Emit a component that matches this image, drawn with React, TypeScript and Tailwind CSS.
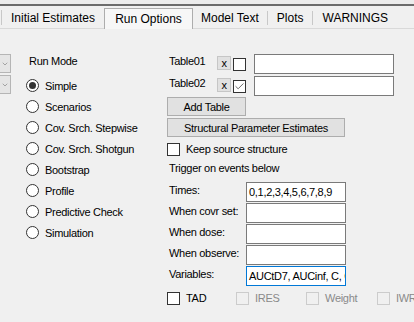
import { Check, ChevronDown } from 'lucide-react';

const runModes = [
  'Simple',
  'Scenarios',
  'Cov. Srch. Stepwise',
  'Cov. Srch. Shotgun',
  'Bootstrap',
  'Profile',
  'Predictive Check',
  'Simulation',
];

const triggers = [
  { label: 'Times:', value: '0,1,2,3,4,5,6,7,8,9' },
  { label: 'When covr set:', value: '' },
  { label: 'When dose:', value: '' },
  { label: 'When observe:', value: '' },
  { label: 'Variables:', value: 'AUCtD7, AUCinf, C, Cmax, Tmax', focused: true },
];

function Radio({ label, checked }: { label: string; checked?: boolean }) {
  return (
    <div className="flex h-[21px] items-center">
      <span className="flex h-[13px] w-[13px] items-center justify-center rounded-full border border-[#333] bg-white">
        {checked && <span className="h-[7px] w-[7px] rounded-full bg-[#333]" />}
      </span>
      <span className="ml-[6px]">{label}</span>
    </div>
  );
}

function CheckBox({ checked, disabled }: { checked?: boolean; disabled?: boolean }) {
  return (
    <span
      className={
        disabled
          ? 'flex h-[13px] w-[13px] shrink-0 items-center justify-center border border-[#cccccc] bg-[#f0f0f0]'
          : 'flex h-[13px] w-[13px] shrink-0 items-center justify-center border border-[#333] bg-white'
      }
    >
      {checked && <Check className="h-[11px] w-[11px] text-[#333]" strokeWidth={1.6} />}
    </span>
  );
}

function TableRow({ name, checked }: { name: string; checked?: boolean }) {
  return (
    <div className="flex h-[20px]">
      <span className="ml-[2px] w-[48px] leading-[14px]">{name}</span>
      <span className="mt-[2px] flex h-[14px] w-[14px] items-end justify-center border border-[#c6c6c6] bg-[#e1e1e1] text-[11px] leading-[12px]">
        x
      </span>
      <span className="ml-[2px] mt-[4px]">
        <CheckBox checked={checked} />
      </span>
      <span className="ml-[8px] h-[20px] w-[140px] border border-[#7a7a7a] bg-white" />
    </div>
  );
}

function Button({ label, width }: { label: string; width: string }) {
  return (
    <div className={`flex h-[19px] items-center justify-center border border-[#adadad] bg-[#e1e1e1] ${width}`}>
      {label}
    </div>
  );
}

export default function App() {
  return (
    <div
      className="h-[322px] w-[414px] overflow-hidden bg-[#f0f0f0] text-[12px] leading-[14px] text-black"
      style={{ fontFamily: '"Liberation Sans", Arial, sans-serif' }}
    >
      {/* tab strip */}
      <div className="h-[4px] bg-[#ececec]" />
      <div className="h-[2px] bg-[#6b6b6b]" />
      <div className="flex h-[23px] items-end border-b border-[#d9d9d9]">
        <div className="flex h-[21px] w-[104px] items-center">
          <span className="ml-[1px] h-[15px] w-px bg-[#c8c8c8]" />
          <span className="ml-[9px]">Initial Estimates</span>
        </div>
        <div className="-mb-px flex h-[21px] w-[89px] items-center justify-center border border-b-0 border-[#adadad] bg-[#f7f7f7] pb-px">
          Run Options
        </div>
        <div className="flex h-[21px] items-center">
          <span className="ml-[8px]">Model Text</span>
          <span className="ml-[8px] h-[14px] w-px bg-[#c8c8c8]" />
          <span className="ml-[9px]">Plots</span>
          <span className="ml-[8px] h-[14px] w-px bg-[#c8c8c8]" />
          <span className="ml-[10px]">WARNINGS</span>
        </div>
      </div>

      <div className="flex text-[11px] tracking-[-0.3px]">
        {/* clipped combo buttons */}
        <div className="mt-[25px] flex w-[11px] shrink-0 flex-col gap-[2px]">
          <div className="flex h-[19px] items-center justify-end border border-l-0 border-[#b5b5b5] bg-[#e5e5e5] pr-[1px]">
            <ChevronDown className="h-[8px] w-[8px] text-[#606060]" strokeWidth={1.5} />
          </div>
          <div className="flex h-[19px] items-center justify-end border border-l-0 border-[#b5b5b5] bg-[#e5e5e5] pr-[1px]">
            <ChevronDown className="h-[8px] w-[8px] text-[#606060]" strokeWidth={1.5} />
          </div>
        </div>

        {/* run mode */}
        <div className="ml-[15px] w-[141px] shrink-0 pt-[25px] whitespace-nowrap">
          <div className="ml-[3px]">Run Mode</div>
          <div className="mt-[7px]">
            {runModes.map((m, i) => (
              <Radio key={m} label={m} checked={i === 0} />
            ))}
          </div>
        </div>

        {/* tables and triggers */}
        <div className="min-w-0 flex-1 pt-[25px] whitespace-nowrap">
          <div className="flex flex-col gap-[2px]">
            <TableRow name="Table01" />
            <TableRow name="Table02" checked />
          </div>
          <div className="mt-px">
            <Button label="Add Table" width="w-[79px]" />
          </div>
          <div className="mt-[2px]">
            <Button label="Structural Parameter Estimates" width="w-[178px]" />
          </div>
          <div className="mt-[5px] flex items-center">
            <CheckBox />
            <span className="ml-[6px]">Keep source structure</span>
          </div>
          <div className="ml-[2px] mt-[5px]">Trigger on events below</div>
          <div className="mt-[7px] flex flex-col gap-px">
            {triggers.map((t) => (
              <div key={t.label} className="flex h-[20px]">
                <span className="ml-[2px] mt-[1px] w-[77px]">{t.label}</span>
                <span
                  className={
                    t.focused
                      ? 'flex h-[20px] w-[100px] items-center overflow-hidden border border-[#0078d7] bg-white pl-[2px]'
                      : 'flex h-[20px] w-[100px] items-center overflow-hidden border border-[#7a7a7a] bg-white pl-[2px]'
                  }
                >
                  {t.value}
                </span>
              </div>
            ))}
          </div>
          <div className="mt-[5px] flex">
            <div className="flex w-[69px] shrink-0 items-center">
              <CheckBox />
              <span className="ml-[6px]">TAD</span>
            </div>
            <div className="flex w-[70px] shrink-0 items-center text-[#8a8a8a]">
              <CheckBox disabled />
              <span className="ml-[6px]">IRES</span>
            </div>
            <div className="flex w-[71px] shrink-0 items-center text-[#8a8a8a]">
              <CheckBox disabled />
              <span className="ml-[6px]">Weight</span>
            </div>
            <div className="flex shrink-0 items-center text-[#8a8a8a]">
              <CheckBox disabled />
              <span className="ml-[6px]">IWRES</span>
            </div>
          </div>
        </div>
      </div>
    </div>
  );
}
